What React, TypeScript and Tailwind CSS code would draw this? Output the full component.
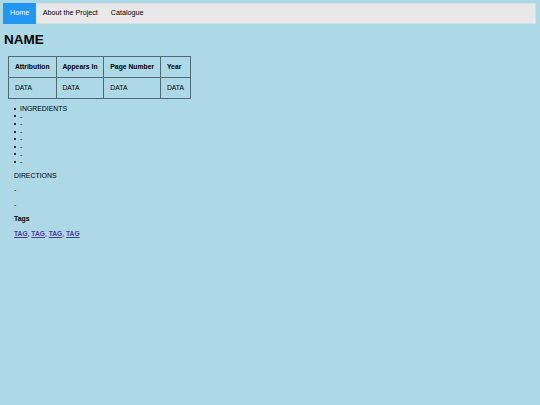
const links = ["Home", "About the Project", "Catalogue"];
const headers = ["Attribution", "Appears In", "Page Number", "Year"];
const ingredients = ["-", "-", "-", "-", "-", "-", "-"];
const tags = ["TAG", "TAG", "TAG", "TAG"];

const App = () => {
  return (
    <div className="min-h-screen bg-[#add8e6] p-[3px] text-[7px] text-black font-['Liberation_Sans',Arial,sans-serif]">
      {/* NAV */}
      <nav className="flex h-[21px] w-[533px] items-stretch bg-[#e8e8e8] border border-[#d6e0e3]">
        {links.map((link, i) => (
          <a
            key={link}
            href="#"
            className={
              i === 0
                ? "-my-px -ml-px flex items-center bg-[#2196f3] px-[7px] text-[7.2px] text-white"
                : "flex items-center px-[6.5px] text-[7.2px] text-black"
            }
          >
            {link}
          </a>
        ))}
      </nav>

      <h1 className="mt-[7px] ml-px text-[13.5px] leading-[17px] font-bold text-black">NAME</h1>

      {/* DETAILS TABLE */}
      <table className="mt-[8px] ml-[5px] border-collapse border border-[#4f6a73]">
        <thead>
          <tr className="h-[21px]">
            {headers.map((h) => (
              <th key={h} className="border border-[#4f6a73] px-[5.9px] text-left text-[6.8px] font-bold">
                {h}
              </th>
            ))}
          </tr>
        </thead>
        <tbody>
          <tr className="h-[21px]">
            {headers.map((h) => (
              <td key={h} className="border border-[#4f6a73] px-[5.9px] text-[6.8px]">
                DATA
              </td>
            ))}
          </tr>
        </tbody>
      </table>

      {/* INGREDIENTS */}
      <ul className="mt-[6px] ml-[11px] flex flex-col">
        {["INGREDIENTS", ...ingredients].map((item, i) => (
          <li key={i} className="flex h-[7.6px] items-center gap-[4px] text-[6.9px] leading-[7.6px]">
            <span className="h-[2px] w-[2px] rounded-full bg-black" />
            {item}
          </li>
        ))}
      </ul>

      {/* DIRECTIONS + TAGS */}
      <div className="mt-[6px] ml-[11px] flex flex-col gap-[6.5px] text-[6.9px] leading-[8px]">
        <p>DIRECTIONS</p>
        <p>-</p>
        <p>-</p>
        <p className="font-bold">Tags</p>
        <p className="text-[6.7px]">
          {tags.map((t, i) => (
            <span key={i}>
              <a href="#" className="font-bold text-[#4f3a9c] underline">
                {t}
              </a>
              {i < tags.length - 1 && ", "}
            </span>
          ))}
        </p>
      </div>
    </div>
  );
};

export default App;
